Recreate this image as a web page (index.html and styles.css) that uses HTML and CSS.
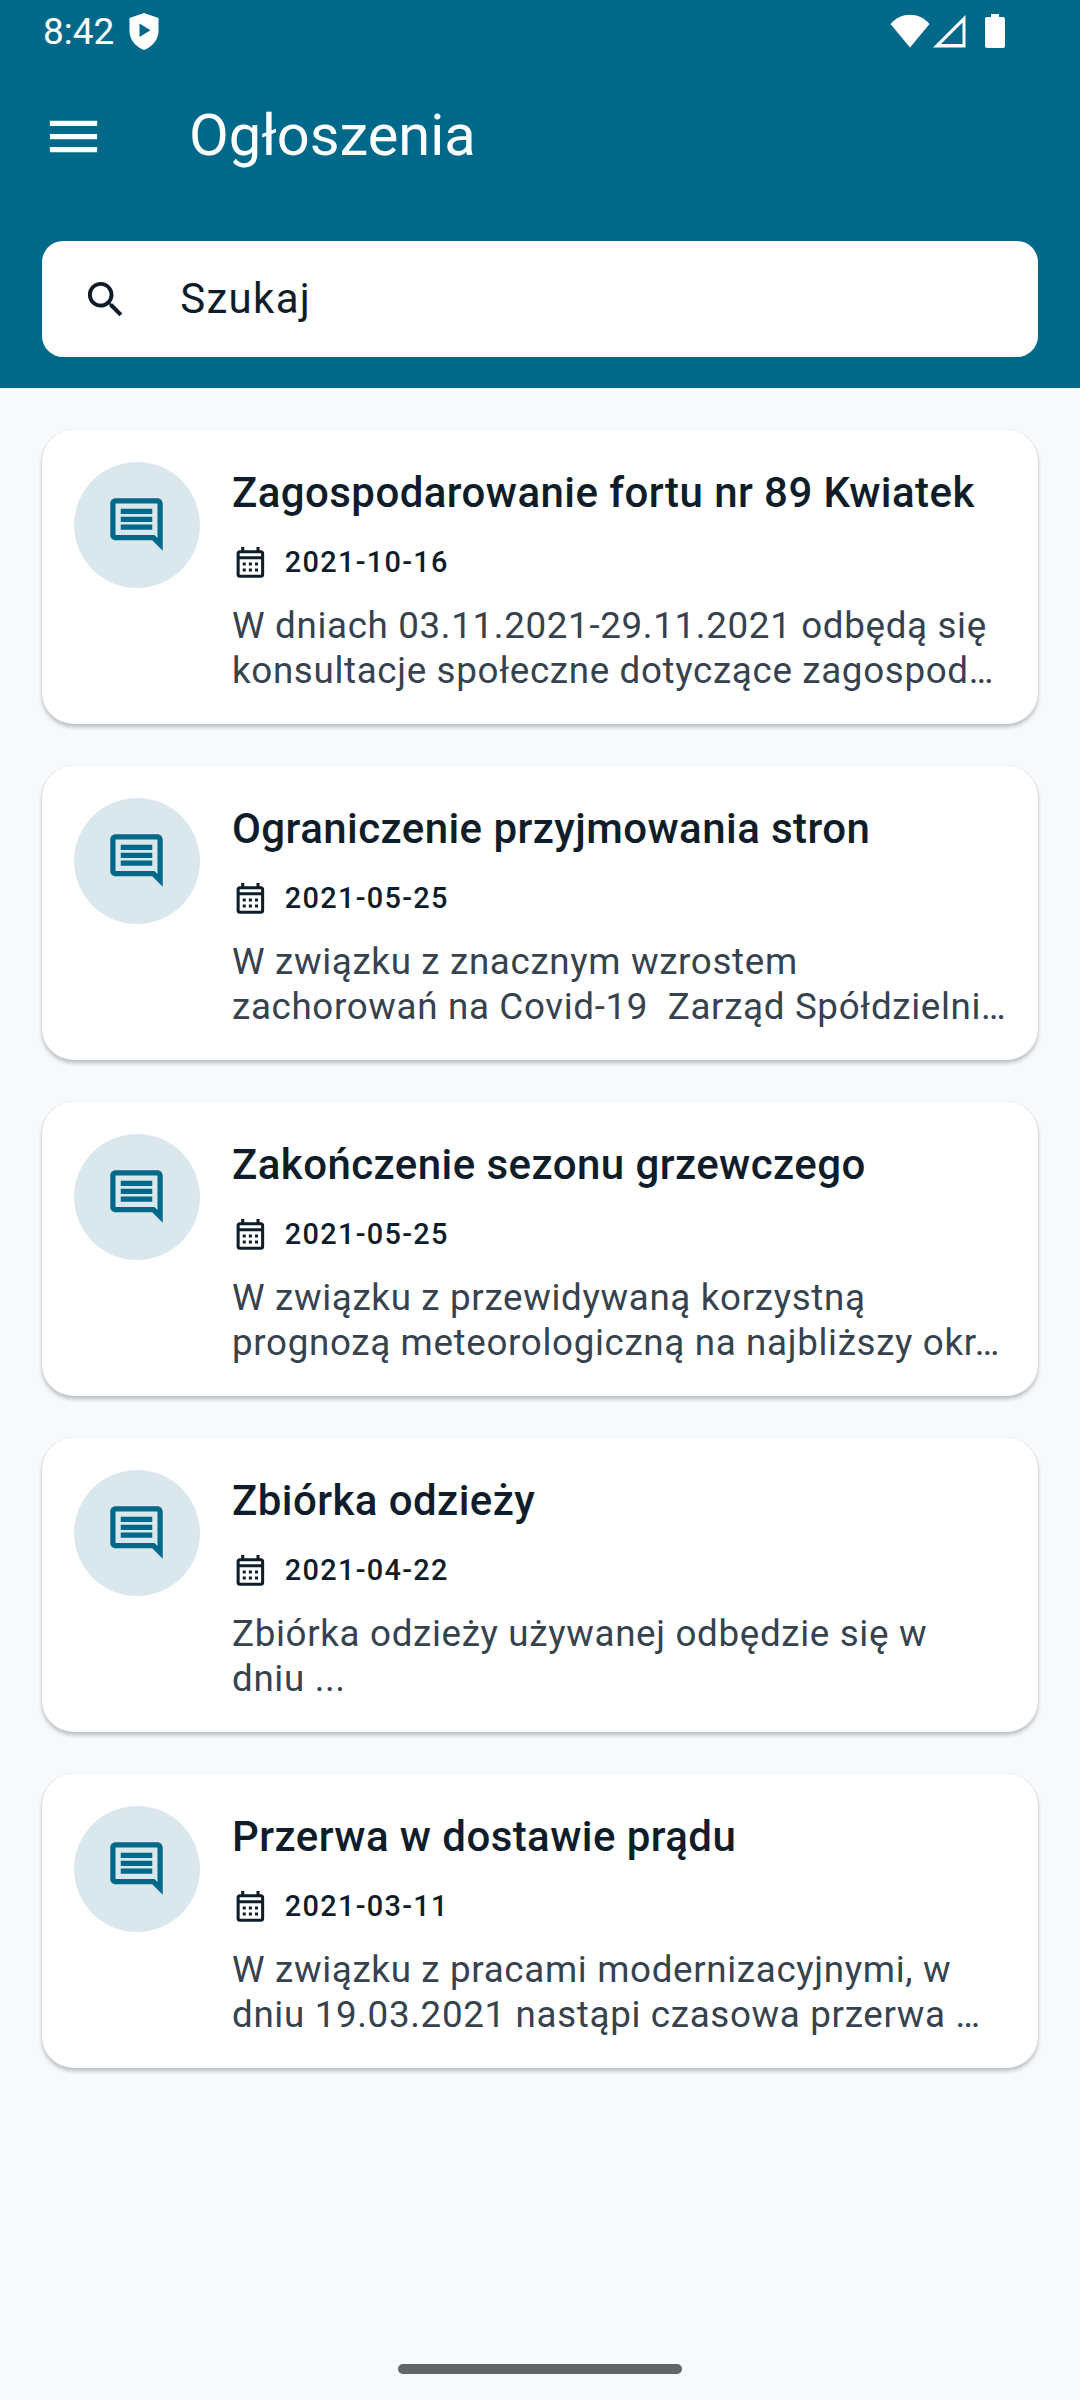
FILE: index.html
```
<!DOCTYPE html>
<html lang="pl">
<head>
  <meta charset="UTF-8" />
  <meta name="viewport" content="width=device-width, initial-scale=1.0"/>
  <title>Ogłoszenia</title>
  <link rel="stylesheet" href="styles.css">
</head>
<body>
  <svg class="sprites" aria-hidden="true">
    <symbol id="comment" viewBox="0 0 24 24">
      <path d="M21.99 4c0-1.1-.89-2-1.99-2H4c-1.1 0-2 .9-2 2v12c0 1.1.9 2 2 2h14l4 4-.01-18zM20 4v13.17L18.83 16H4V4h16zM6 12h12v2H6zm0-3h12v2H6zm0-3h12v2H6z"/>
    </symbol>
    <symbol id="calendar" viewBox="0 0 24 24">
      <path d="M19 4h-1V2h-2v2H8V2H6v2H5c-1.11 0-1.99.9-1.99 2L3 20c0 1.1.89 2 2 2h14c1.1 0 2-.9 2-2V6c0-1.1-.9-2-2-2zm0 16H5V10h14v10zm0-12H5V6h14v2zM9 14H7v-2h2v2zm4 0h-2v-2h2v2zm4 0h-2v-2h2v2zm-8 4H7v-2h2v2zm4 0h-2v-2h2v2zm4 0h-2v-2h2v2z"/>
    </symbol>
  </svg>

  <header class="header">
    <div class="status-bar">
      <span class="clock">8:42</span>
      <svg class="shield" viewBox="0 0 30 37"><path fill-rule="evenodd" d="M15 0L29.500 5V18C29.500 27 23 34 15 37C7 34 .5 27 .5 18V5zM10.500 10.500V24L21.500 17.300z"/></svg>
      <svg class="signals" viewBox="0 0 116 36">
        <path d="M.5 10C11-2.200 29-2.200 39.500 10L20 33.500z"/>
        <path fill-rule="evenodd" d="M43 33.500L75.500 1V33.500zM51 30H72.500V8.500z"/>
        <path d="M101 0h8v3h4q2 0 2 2v27q0 2-2 2H97q-2 0-2-2V5q0-2 2-2h4z"/>
      </svg>
    </div>
    <div class="toolbar">
      <svg class="menu-icon" viewBox="0 0 24 24"><path d="M3 18h18v-2H3v2zm0-5h18v-2H3v2zm0-7v2h18V6H3z"/></svg>
      <h1 class="title">Ogłoszenia</h1>
    </div>
    <div class="search">
      <svg class="search-icon" viewBox="0 0 24 24"><path d="M15.500 14h-.79l-.28-.27C15.410 12.590 16 11.110 16 9.500 16 5.910 13.090 3 9.500 3S3 5.910 3 9.500 5.910 16 9.500 16c1.610 0 3.090-.59 4.230-1.570l.27.28v.79l5 4.990L20.490 19l-4.990-5zm-6 0C7.010 14 5 11.990 5 9.500S7.010 5 9.500 5 14 7.010 14 9.500 11.990 14 9.500 14z"/></svg>
      <span class="search-text">Szukaj</span>
    </div>
  </header>

  <main class="list">
    <article class="card">
      <div class="avatar"><svg><use href="#comment"/></svg></div>
      <div class="content">
        <h2>Zagospodarowanie fortu nr 89 Kwiatek</h2>
        <div class="date"><svg><use href="#calendar"/></svg><span>2021-10-16</span></div>
        <p>W dniach 03.11.2021-29.11.2021 odbędą się<br>konsultacje społeczne dotyczące zagospod…</p>
      </div>
    </article>
    <article class="card">
      <div class="avatar"><svg><use href="#comment"/></svg></div>
      <div class="content">
        <h2>Ograniczenie przyjmowania stron</h2>
        <div class="date"><svg><use href="#calendar"/></svg><span>2021-05-25</span></div>
        <p>W związku z znacznym wzrostem<br>zachorowań na Covid-19&nbsp; Zarząd Spółdzielni…</p>
      </div>
    </article>
    <article class="card">
      <div class="avatar"><svg><use href="#comment"/></svg></div>
      <div class="content">
        <h2>Zakończenie sezonu grzewczego</h2>
        <div class="date"><svg><use href="#calendar"/></svg><span>2021-05-25</span></div>
        <p>W związku z przewidywaną korzystną<br>prognozą meteorologiczną na najbliższy okr…</p>
      </div>
    </article>
    <article class="card">
      <div class="avatar"><svg><use href="#comment"/></svg></div>
      <div class="content">
        <h2>Zbiórka odzieży</h2>
        <div class="date"><svg><use href="#calendar"/></svg><span>2021-04-22</span></div>
        <p>Zbiórka odzieży używanej odbędzie się w<br>dniu ...</p>
      </div>
    </article>
    <article class="card">
      <div class="avatar"><svg><use href="#comment"/></svg></div>
      <div class="content">
        <h2>Przerwa w dostawie prądu</h2>
        <div class="date"><svg><use href="#calendar"/></svg><span>2021-03-11</span></div>
        <p>W związku z pracami modernizacyjnymi, w<br>dniu 19.03.2021 nastąpi czasowa przerwa …</p>
      </div>
    </article>
  </main>

  <div class="home-bar"></div>
</body>
</html>
```
FILE: styles.css
```
* {
  box-sizing: border-box;
}

body {
  margin: 0;
  height: 2400px;
  display: flex;
  flex-direction: column;
  background: #f6fafd;
  color: #0f1d2a;
  font-family: Roboto, sans-serif;
  overflow: hidden;
}

svg {
  display: block;
  flex: none;
  fill: currentColor;
}

.sprites {
  display: none;
}

.header {
  height: 388.4px;
  flex: none;
  background: #006989;
  color: #fff;
}

.status-bar {
  height: 63px;
  padding: 0 74px 0 43px;
  display: flex;
  align-items: center;
}

.clock {
  font-size: 37px;
  line-height: 63px;
}

.shield {
  width: 30px;
  height: 37px;
  margin-left: 15px;
}

.signals {
  width: 116px;
  height: 36px;
  margin-left: auto;
}

.toolbar {
  height: 147px;
  padding: 0 42px;
  display: flex;
  align-items: center;
  gap: 84px;
}

.menu-icon {
  width: 63px;
  height: 63px;
}

.title {
  margin: 0;
  padding-bottom: 4px;
  font-size: 57.75px;
  font-weight: 400;
  line-height: 74px;
}

.search {
  height: 115.5px;
  margin: 31.4px 42px 0;
  padding-left: 39.5px;
  display: flex;
  align-items: center;
  gap: 51.5px;
  border-radius: 21px;
  background: #fff;
  color: #0f1d2a;
}

.search-icon {
  width: 47.25px;
  height: 47.25px;
}

.search-text {
  padding-bottom: 2px;
  font-size: 42px;
  letter-spacing: 1.3px;
}

.list {
  padding: 42px;
  display: flex;
  flex-direction: column;
  gap: 42px;
}

.card {
  height: 294px;
  padding: 31.5px;
  display: flex;
  gap: 32.5px;
  border-radius: 31.5px;
  background: #fff;
  box-shadow: 0 3px 4px rgba(0, 0, 0, 0.24), 0 0 3px rgba(0, 0, 0, 0.06);
}

.avatar {
  width: 126px;
  height: 126px;
  flex: none;
  display: grid;
  place-items: center;
  border-radius: 50%;
  background: #dae8ed;
  color: #00698a;
}

.avatar svg {
  width: 63px;
  height: 63px;
}

.content {
  white-space: nowrap;
}

.content h2 {
  margin: 0;
  font-size: 42px;
  font-weight: 500;
  line-height: 61px;
  letter-spacing: 0.43px;
}

.date {
  height: 42px;
  margin-top: 18px;
  display: flex;
  align-items: center;
  gap: 16px;
  font-size: 28.9px;
  font-weight: 500;
  letter-spacing: 1.3px;
}

.date svg {
  width: 36.75px;
  height: 36.75px;
}

.content p {
  margin: 20px 0 0;
  color: #36424e;
  font-size: 36.75px;
  line-height: 45px;
  letter-spacing: 0.66px;
}

.home-bar {
  width: 284px;
  height: 10px;
  margin: auto auto 26px;
  border-radius: 5px;
  background: #636466;
}
```
